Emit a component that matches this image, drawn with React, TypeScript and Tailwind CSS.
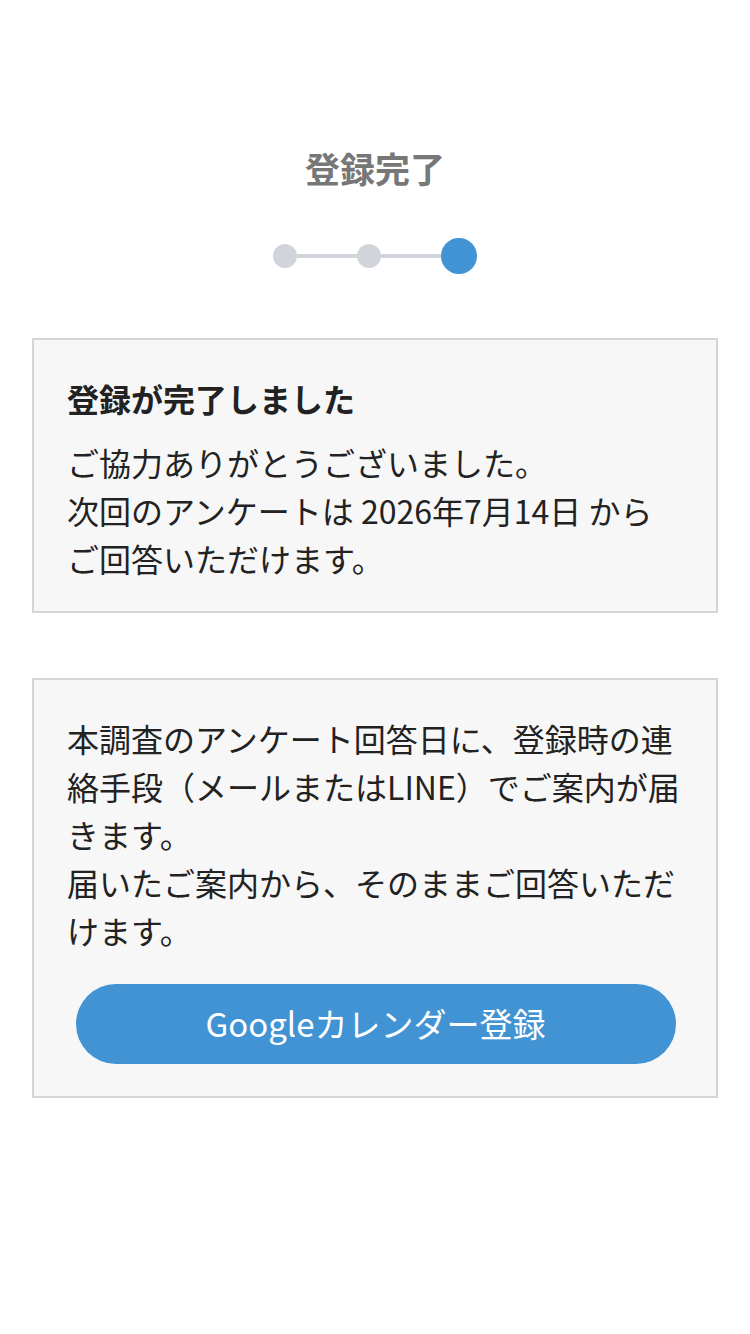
export default function App() {
  const font = { fontFamily: '"Noto Sans CJK JP", "Noto Sans", sans-serif' };
  return (
    <div className="w-[750px] min-h-[1334px] bg-white" style={font}>
      <div className="pt-[141px] flex flex-col items-center">
        <h1 className="text-[35px] leading-[54px] font-bold text-[#777777]">登録完了</h1>
        <div className="mt-[43px] flex items-center">
          <div className="w-[24px] h-[24px] rounded-full bg-[#d1d4da]" />
          <div className="w-[60px] h-[4px] bg-[#d1d4da]" />
          <div className="w-[24px] h-[24px] rounded-full bg-[#d1d4da]" />
          <div className="w-[60px] h-[4px] bg-[#d1d4da]" />
          <div className="w-[36px] h-[36px] rounded-full bg-[#4293d4]" />
        </div>
      </div>
      <div className="mx-[32px] mt-[64px] border-2 border-[#d3d5d9] bg-[#f7f7f7] pl-[33px] pr-[32px] pt-[34px] pb-[29px] text-[#222222]">
        <h2 className="text-[32px] leading-[48px] font-bold">登録が完了しました</h2>
        <p className="mt-[16px] text-[32px] leading-[48px]">
          ご協力ありがとうございました。
          <br />
          次回のアンケートは 2026年7月14日 から
          <br />
          ご回答いただけます。
        </p>
      </div>
      <div className="mx-[32px] mt-[65px] border-2 border-[#d3d5d9] bg-[#f7f7f7] pl-[33px] pr-[32px] pt-[34px] pb-[32px] text-[#222222]">
        <p className="text-[32px] leading-[48px]">
          本調査のアンケート回答日に、登録時の連絡手段（メールまたはLINE）でご案内が届きます。
          <br />
          届いたご案内から、そのままご回答いただけます。
        </p>
        <button className="mt-[30px] mx-auto block w-[600px] h-[80px] rounded-full bg-[#4293d4] text-white text-[33px]">
          Googleカレンダー登録
        </button>
      </div>
    </div>
  );
}
